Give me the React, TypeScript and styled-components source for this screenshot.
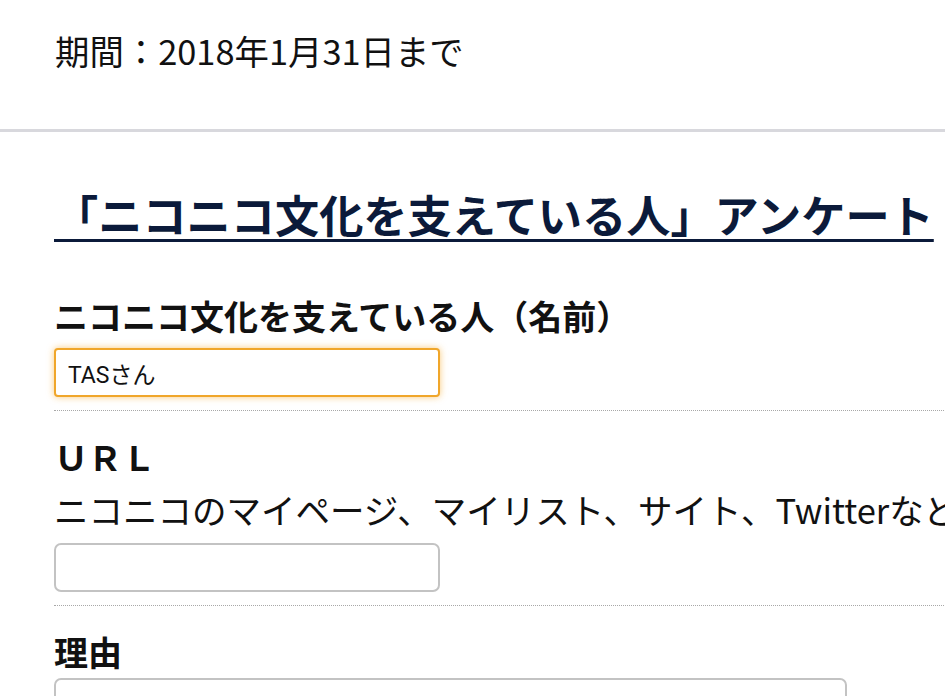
import React, { useEffect, useRef } from 'react';
import styled, { createGlobalStyle } from 'styled-components';

const GlobalStyle = createGlobalStyle`
  html, body {
    margin: 0;
    padding: 0;
    background: #ffffff;
    overflow: hidden;
  }
  body {
    font-family: "Noto Sans CJK JP", "Noto Sans", sans-serif;
    color: #111111;
  }
`;

function App() {
  const nameRef = useRef<HTMLInputElement>(null);

  useEffect(() => {
    const el = nameRef.current;
    if (el) {
      el.focus();
      el.setSelectionRange(el.value.length, el.value.length);
    }
  }, []);

  return (
    <>
      <GlobalStyle />
      <Page>
        <Header>
          <Period>期間：2018年1月31日まで</Period>
        </Header>
        <Main>
          <Title>「ニコニコ文化を支えている人」アンケート</Title>
          <Field>
            <Label>ニコニコ文化を支えている人（名前）</Label>
            <TextInput ref={nameRef} $focused defaultValue="TASさん" />
          </Field>
          <Field>
            <Label>ＵＲＬ</Label>
            <Note>ニコニコのマイページ、マイリスト、サイト、Twitterなど</Note>
            <TextInput />
          </Field>
          <Field $last>
            <Label>理由</Label>
            <TextArea />
          </Field>
        </Main>
      </Page>
    </>
  );
}

const Page = styled.div`
  width: 945px;
  height: 696px;
  overflow: hidden;
`;

const Header = styled.header`
  height: 129px;
  padding-left: 55px;
  display: flex;
  align-items: center;
  border-bottom: 3px solid #d8d8dd;
  box-sizing: content-box;
`;

const Period = styled.div`
  font-size: 34.4px;
  line-height: 1;
  margin-top: -29px;
  white-space: nowrap;
`;

const Main = styled.main`
  padding: 52px 0 0 54px;
  width: 1100px;
`;

const Title = styled.h1`
  margin: 0 0 50px;
  font-size: 44.2px;
  font-weight: 700;
  line-height: 60px;
  color: #0b1a3a;
  text-decoration: underline;
  text-decoration-thickness: 3px;
  text-underline-offset: 6px;
  white-space: nowrap;
`;

const Field = styled.div<{ $last?: boolean }>`
  display: flex;
  flex-direction: column;
  align-items: flex-start;
  padding-bottom: ${(p) => (p.$last ? '0' : '13px')};
  margin-bottom: 24px;
  border-bottom: ${(p) => (p.$last ? 'none' : '1px dotted #a8a8a8')};
`;

const Label = styled.div`
  font-size: 34px;
  font-weight: 700;
  line-height: 44px;
  white-space: nowrap;
`;

const Note = styled.div`
  font-size: 34.5px;
  line-height: 48px;
  margin-top: 6px;
  white-space: nowrap;
`;

const TextInput = styled.input<{ $focused?: boolean }>`
  box-sizing: border-box;
  width: 386px;
  height: 49px;
  margin-top: 10px;
  padding: 0 12px;
  font-family: Roboto, "Noto Sans CJK JP", sans-serif;
  font-size: 23px;
  color: #111111;
  caret-color: #111111;
  background: #ffffff;
  border-radius: ${(p) => (p.$focused ? '4px' : '7px')};
  border: 2px solid ${(p) => (p.$focused ? '#f0a62a' : '#c3c3c3')};
  box-shadow: ${(p) => (p.$focused ? '0 0 7px rgba(245, 166, 35, 0.6)' : 'none')};
  outline: none;
`;

const TextArea = styled.textarea`
  box-sizing: border-box;
  width: 793px;
  height: 120px;
  margin-top: 4px;
  border: 2px solid #c3c3c3;
  border-radius: 7px;
  resize: none;
  outline: none;
`;

export default App;
